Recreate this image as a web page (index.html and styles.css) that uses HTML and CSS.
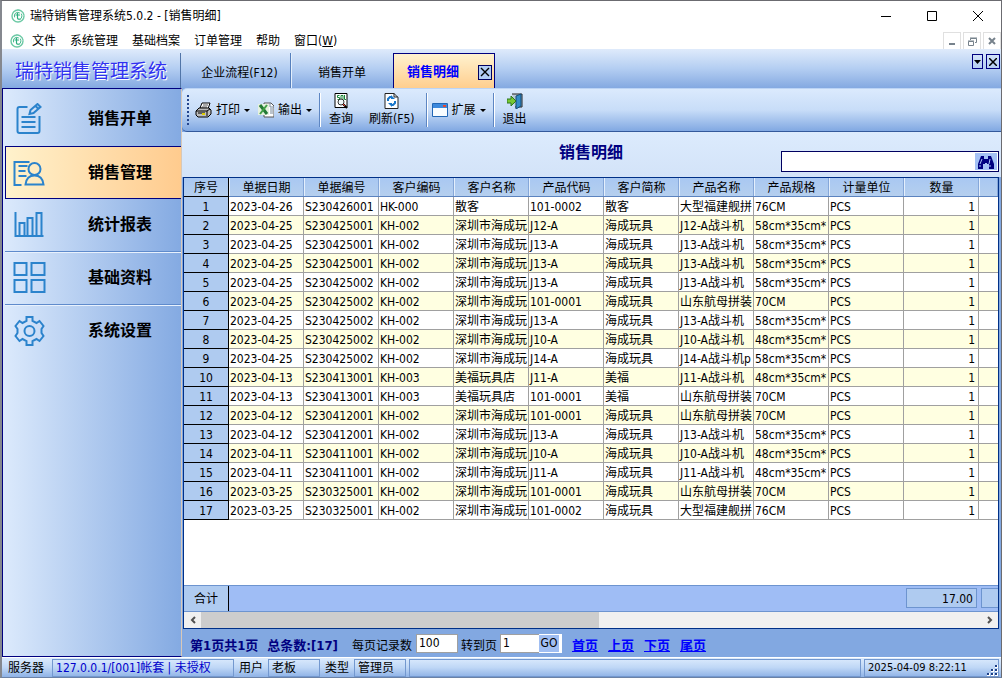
FILE: index.html
```html
<!DOCTYPE html>
<html lang="zh-CN">
<head>
<meta charset="utf-8">
<title>瑞特销售管理系统5.0.2 - [销售明细]</title>
<link rel="stylesheet" href="styles.css">
</head>
<body>
<svg class="defs" aria-hidden="true">
  <symbol id="logo" viewBox="0 0 14 14"><g fill="none" stroke-linecap="round"><path d="M7 1a6 6 0 1 0 6 6M5 1.400a6 6 0 0 1 8 4.600" stroke="#6cc9a5" stroke-width="1.400"/><path d="M3.500 8a3.500 3.500 0 0 1 5-4.200M10.500 5a4 4 0 0 1-1.500 5.500" stroke="#43b98b"/><path d="M6.500 4v5q.5 1.800 2.500 1M5 6h3.500" stroke="#2cae7e" stroke-width="1.200"/></g></symbol>
</svg>
<div class="window">
  <header class="titlebar">
    <svg class="logo"><use href="#logo"/></svg>
    <h1 class="caption">瑞特销售管理系统5.0.2 - [销售明细]</h1>
    <div class="winbtns">
      <button aria-label="最小化"><svg width="12" height="12"><path d="M1 6.500h10" stroke="#000"/></svg></button>
      <button aria-label="最大化"><svg width="12" height="12"><path d="M1.500 1.500h9v9h-9z" fill="none" stroke="#000"/></svg></button>
      <button aria-label="关闭"><svg width="12" height="12"><path d="M1 1l10 10M11 1L1 11" stroke="#000"/></svg></button>
    </div>
  </header>
  <nav class="menubar">
    <svg class="logo"><use href="#logo"/></svg>
    <button>文件</button><button>系统管理</button><button>基础档案</button><button>订单管理</button><button>帮助</button><button>窗口(<u>W</u>)</button>
    <div class="mdibtns">
      <button aria-label="最小化子窗口"><svg width="8" height="8"><path d="M1 7h6" stroke="#77828c" stroke-width="2"/></svg></button>
      <button aria-label="还原子窗口"><svg width="9" height="9"><path d="M2.500 3V1.500h6v4H7M.5 4.500h5v4h-5zM2 1h7M0 4h6" fill="none" stroke="#77828c"/></svg></button>
      <button aria-label="关闭子窗口"><svg width="8" height="8"><path d="M1 1l6 6M7 1L1 7" stroke="#77828c" stroke-width="2"/></svg></button>
    </div>
  </nav>
  <div class="tabbar">
    <div class="brand">瑞特销售管理系统</div>
    <button class="tab">企业流程(F12)</button>
    <button class="tab tab-plain">销售开单</button>
    <div class="tab-active"><button class="tab-name">销售明细</button><button class="box-x" aria-label="关闭标签"><svg width="10" height="10"><path d="M1 1l8 8M9 1L1 9" stroke="#000" stroke-width="1.400"/></svg></button></div>
    <div class="tab-tools">
      <button class="drop" aria-label="标签列表"><svg width="7" height="4"><path d="M0 0h7L3.500 4z"/></svg></button>
      <button aria-label="关闭当前标签"><svg width="8" height="8"><path d="M0 0l8 8M8 0L0 8" stroke="#000" stroke-width="1.500"/></svg></button>
    </div>
  </div>
  <div class="main">
    <nav class="sidebar">
      <button class="side"><svg viewBox="0 0 32 32"><path d="M14 4H6q-2 0-2 2v22q0 2 2 2h18q2 0 2-2V13M8 14h14M8 19h14M8 24h14M16 11l1-4 7-6 3 3-7 6zM22 3l3 3"/></svg><span>销售开单</span></button>
      <button class="side selected"><svg viewBox="0 0 32 32"><path d="M16 5H1v23h7M5 9h9M5 14h7M5 19h8"/><circle cx="21" cy="12" r="6"/><path d="M12 27.500q1-9 9-9t9 9z"/></svg><span>销售管理</span></button>
      <button class="side"><svg viewBox="0 0 32 32"><path d="M2 3v24h28M6 27V14h5v13M14 27V9h5v18M23 27V4h5v23"/></svg><span>统计报表</span></button>
      <button class="side"><svg viewBox="0 0 32 32"><path d="M1 1h12v12H1zM18 1h13v12H18zM1 18h12v12H1zM18 18h13v12H18z"/></svg><span>基础资料</span></button>
      <button class="side last"><svg viewBox="0 0 32 32"><path d="M13 2h6v4l4 2 3-2 4 5-2 3v4l2 3-4 5-3-2-4 2v4h-6v-4l-4-2-3 2-4-5 2-3v-4l-2-3 4-5 3 2 4-2z"/><circle cx="16" cy="16" r="5"/></svg><span>系统设置</span></button>
    </nav>
    <main class="content">
      <div class="toolbar">
        <span class="grip"></span>
        <button class="tool"><svg width="17" height="16"><path d="M5 6L7 1h8l-2 6z" fill="#fff" stroke="#000"/><path d="M8 3h5M7 5h5" stroke="#555"/><path d="M1 9l3-3h10l2 2v4l-3 3H3l-2-2z" fill="#bdbdbd" stroke="#000"/><path d="M1 9h11v5M12 9l3-2M3 11h7" fill="none" stroke="#000"/><path d="M7 12h3" stroke="#dc0" stroke-width="2"/></svg>打印<i class="arrow"></i></button>
        <button class="tool"><svg width="16" height="16"><path d="M6 1h7l3 3v11H6z" fill="#fff" stroke="#555"/><path d="M12 1v4h4M12 7h3M12 9h3M12 11h3" fill="none" stroke="#789"/><path d="M0 2h11v11H0z" fill="#e6f1df"/><path d="M2 3l7 9" stroke="#237a35" stroke-width="3"/><path d="M9 3l-7 9" stroke="#43a047" stroke-width="2"/></svg>输出<i class="arrow"></i></button>
        <span class="sep"></span>
        <button class="tool tall"><svg width="15" height="16"><path d="M1 .5h12v14H1z" fill="#fff" stroke="#000"/><path d="M5.500 2.500h-2v2h2v2h-2M7 2.500h2v4H7zM10.500 2v4.500H12" fill="none" stroke="#16863a"/><circle cx="7" cy="9" r="3" fill="#eef8fb" stroke="#333"/><path d="M9 11l4 4" stroke="#000" stroke-width="2"/><path d="M9 11l2 2" stroke="#e32"/></svg>查询</button>
        <button class="tool tall"><svg width="15" height="16"><path d="M1 .5h9l4 4v11H1z" fill="#fff" stroke="#222"/><path d="M10 0v4h4" fill="none" stroke="#222"/><path d="M4 8V6l2-2h2M11 8v2l-2 2H7" fill="none" stroke="#1976c9" stroke-width="2"/><path d="M7 2l4 4H7zM8 14l-4-4h4z" fill="#1976c9"/></svg>刷新(F5)</button>
        <span class="sep"></span>
        <button class="tool"><svg width="16" height="16"><path d="M.5 1.500h15v13H.5z" fill="#f8fcff" stroke="#2166b5"/><path d="M1 2h14v4H1z" fill="#3d89dc"/><path d="M11 3h3v2h-3z" fill="#e54830"/></svg>扩展<i class="arrow"></i></button>
        <span class="sep"></span>
        <button class="tool tall"><svg width="16" height="16"><path d="M5 1h10v13H8" fill="#b9c9d4" stroke="#222"/><path d="M9 3l5-2v12l-5 3z" fill="#338bc7" stroke="#124b78"/><path d="M0 6h4V3l5 5-5 5v-3H0z" fill="#78c832" stroke="#2d7620"/></svg>退出</button>
      </div>
      <div class="heading">
        <h2>销售明细</h2>
        <form class="search"><input aria-label="搜索"><button type="button" aria-label="查找"><svg width="16" height="14"><path d="M3 1h3v3h4V1h3l3 8v5h-5V9H9V8H7v1H5v5H0V9z" fill="#000080"/><path d="M2 9l2-5M11 9l1-5M2 10v2M12 10v2" stroke="#a9c4f5"/></svg></button></form>
      </div>
      <section class="grid">
        <div class="viewport">
          <table>
            <colgroup><col class="c-no"><col class="c"><col class="c"><col class="c"><col class="c"><col class="c"><col class="c"><col class="c"><col class="c"><col class="c"><col class="c"><col></colgroup>
            <thead><tr><th>序号</th><th>单据日期</th><th>单据编号</th><th>客户编码</th><th>客户名称</th><th>产品代码</th><th>客户简称</th><th>产品名称</th><th>产品规格</th><th>计量单位</th><th>数量</th><th></th></tr></thead>
            <tbody>
              <tr><th>1</th><td>2023-04-26</td><td>S230426001</td><td>HK-000</td><td>散客</td><td>101-0002</td><td>散客</td><td>大型福建舰拼</td><td>76CM</td><td>PCS</td><td>1</td><td></td></tr>
              <tr><th>2</th><td>2023-04-25</td><td>S230425001</td><td>KH-002</td><td>深圳市海成玩</td><td>J12-A</td><td>海成玩具</td><td>J12-A战斗机</td><td>58cm*35cm*</td><td>PCS</td><td>1</td><td></td></tr>
              <tr><th>3</th><td>2023-04-25</td><td>S230425001</td><td>KH-002</td><td>深圳市海成玩</td><td>J13-A</td><td>海成玩具</td><td>J13-A战斗机</td><td>58cm*35cm*</td><td>PCS</td><td>1</td><td></td></tr>
              <tr><th>4</th><td>2023-04-25</td><td>S230425001</td><td>KH-002</td><td>深圳市海成玩</td><td>J13-A</td><td>海成玩具</td><td>J13-A战斗机</td><td>58cm*35cm*</td><td>PCS</td><td>1</td><td></td></tr>
              <tr><th>5</th><td>2023-04-25</td><td>S230425002</td><td>KH-002</td><td>深圳市海成玩</td><td>J13-A</td><td>海成玩具</td><td>J13-A战斗机</td><td>58cm*35cm*</td><td>PCS</td><td>1</td><td></td></tr>
              <tr><th>6</th><td>2023-04-25</td><td>S230425002</td><td>KH-002</td><td>深圳市海成玩</td><td>101-0001</td><td>海成玩具</td><td>山东航母拼装</td><td>70CM</td><td>PCS</td><td>1</td><td></td></tr>
              <tr><th>7</th><td>2023-04-25</td><td>S230425002</td><td>KH-002</td><td>深圳市海成玩</td><td>J13-A</td><td>海成玩具</td><td>J13-A战斗机</td><td>58cm*35cm*</td><td>PCS</td><td>1</td><td></td></tr>
              <tr><th>8</th><td>2023-04-25</td><td>S230425002</td><td>KH-002</td><td>深圳市海成玩</td><td>J10-A</td><td>海成玩具</td><td>J10-A战斗机</td><td>48cm*35cm*</td><td>PCS</td><td>1</td><td></td></tr>
              <tr><th>9</th><td>2023-04-25</td><td>S230425002</td><td>KH-002</td><td>深圳市海成玩</td><td>J14-A</td><td>海成玩具</td><td>J14-A战斗机p</td><td>58cm*35cm*</td><td>PCS</td><td>1</td><td></td></tr>
              <tr><th>10</th><td>2023-04-13</td><td>S230413001</td><td>KH-003</td><td>美福玩具店</td><td>J11-A</td><td>美福</td><td>J11-A战斗机</td><td>48cm*35cm*</td><td>PCS</td><td>1</td><td></td></tr>
              <tr><th>11</th><td>2023-04-13</td><td>S230413001</td><td>KH-003</td><td>美福玩具店</td><td>101-0001</td><td>美福</td><td>山东航母拼装</td><td>70CM</td><td>PCS</td><td>1</td><td></td></tr>
              <tr><th>12</th><td>2023-04-12</td><td>S230412001</td><td>KH-002</td><td>深圳市海成玩</td><td>101-0001</td><td>海成玩具</td><td>山东航母拼装</td><td>70CM</td><td>PCS</td><td>1</td><td></td></tr>
              <tr><th>13</th><td>2023-04-12</td><td>S230412001</td><td>KH-002</td><td>深圳市海成玩</td><td>J13-A</td><td>海成玩具</td><td>J13-A战斗机</td><td>58cm*35cm*</td><td>PCS</td><td>1</td><td></td></tr>
              <tr><th>14</th><td>2023-04-11</td><td>S230411001</td><td>KH-002</td><td>深圳市海成玩</td><td>J10-A</td><td>海成玩具</td><td>J10-A战斗机</td><td>48cm*35cm*</td><td>PCS</td><td>1</td><td></td></tr>
              <tr><th>15</th><td>2023-04-11</td><td>S230411001</td><td>KH-002</td><td>深圳市海成玩</td><td>J11-A</td><td>海成玩具</td><td>J11-A战斗机</td><td>48cm*35cm*</td><td>PCS</td><td>1</td><td></td></tr>
              <tr><th>16</th><td>2023-03-25</td><td>S230325001</td><td>KH-002</td><td>深圳市海成玩</td><td>101-0001</td><td>海成玩具</td><td>山东航母拼装</td><td>70CM</td><td>PCS</td><td>1</td><td></td></tr>
              <tr><th>17</th><td>2023-03-25</td><td>S230325001</td><td>KH-002</td><td>深圳市海成玩</td><td>101-0002</td><td>海成玩具</td><td>大型福建舰拼</td><td>76CM</td><td>PCS</td><td>1</td><td></td></tr>
            </tbody>
          </table>
        </div>
        <div class="totals"><span class="sum-label">合计</span><output class="sum">17.00</output><span class="sum-next"></span></div>
        <div class="hscroll">
          <button aria-label="向左滚动"><svg width="6" height="8"><path d="M5 1L2 4l3 3" fill="none" stroke="#505050" stroke-width="2"/></svg></button>
          <div class="track"><div class="thumb"></div></div>
          <button aria-label="向右滚动"><svg width="6" height="8"><path d="M1 1l3 3-3 3" fill="none" stroke="#505050" stroke-width="2"/></svg></button>
        </div>
      </section>
      <footer class="pager">
        <strong>第1页共1页</strong><strong class="count">总条数:[17]</strong>
        <label for="size">每页记录数</label><input id="size" class="size" value="100">
        <label for="goto">转到页</label><span class="goto"><input id="goto" value="1"><button>GO</button></span>
        <span class="links"><a href="#">首页</a><a href="#">上页</a><a href="#">下页</a><a href="#">尾页</a></span>
      </footer>
    </main>
  </div>
  <footer class="status">
    <span>服务器</span><span class="cell server">127.0.0.1/[001]帐套 | 未授权</span>
    <span>用户</span><span class="cell short">老板</span>
    <span>类型</span><span class="cell short">管理员</span>
    <span class="cell fill"></span>
    <span class="cell clock">2025-04-09 8:22:11<svg width="11" height="11"><path d="M8 0h3v3H8zM8 4h3v3H8zM4 4h3v3H4zM8 8h3v3H8zM4 8h3v3H4zM0 8h3v3H0z" fill="#fff"/><path d="M8 0h2v2H8zM8 4h2v2H8zM4 4h2v2H4zM8 8h2v2H8zM4 8h2v2H4zM0 8h2v2H0z" fill="#1c3f86"/></svg></span>
  </footer>
</div>
</body>
</html>
```
FILE: styles.css
```css
* { box-sizing: border-box; }
body { margin: 0; }
body, button, input {
  font: 12px/16px "DejaVu Sans Condensed", "Noto Sans CJK SC", sans-serif;
  color: #000;
}
button { padding: 0; border: 0; background: none; white-space: nowrap; }
input { padding: 0 2px; border: 0; border-radius: 0; outline: 0; background: #fff; }
svg { display: block; flex: none; }
.defs { display: none; }
.window {
  display: flex; flex-direction: column; height: 100vh; overflow: hidden;
  border: 1px solid #6b6b70; border-left: 2px solid #85888f; border-bottom-color: #6b82a6;
  background: #fff;
}
.logo { width: 14px; height: 14px; }

/* Title and menu */
.titlebar { display: flex; align-items: center; flex: none; height: 30px; padding-left: 9px; gap: 5px; }
.caption { flex: 1; margin: 0; font-size: 12px; font-weight: 400; }
.winbtns { display: flex; }
.winbtns button { display: grid; place-items: center; width: 46px; height: 28px; }
.menubar { display: flex; align-items: center; flex: none; height: 18px; padding: 2px 0 0 8px; gap: 14px; }
.menubar .logo { margin-right: -6px; }
.mdibtns { display: flex; gap: 2px; margin-left: auto; }
.mdibtns button { display: grid; place-items: center; width: 18px; height: 18px; border: 1px solid #e0e0e0; }

/* Document tabs */
.tabbar {
  display: flex; flex: none; height: 39px;
  background: linear-gradient(#dfebfb, #b4cef2 50%, #84a9e1);
}
.brand {
  width: 179px; margin-top: 4px; padding-left: 13px; border-right: 1px solid #5175a8;
  font: 400 19px/34px "Noto Sans CJK SC", sans-serif; color: #3030f0; text-shadow: 1px 1px 0 #fff;
}
.tab { width: 110px; margin-top: 4px; padding: 4px 0 0 8px; border-right: 1px solid #5680bd; box-shadow: 1px 0 #e4effc; }
.tab-plain { width: 102px; padding-left: 0; border: 0; box-shadow: none; }
.tab-active {
  display: flex; align-items: center; justify-content: space-between;
  width: 102px; margin-top: 4px; padding: 2px 2px 0 13px;
  border: 1px solid #000080; border-bottom: 0; background: linear-gradient(#fff2cf, #ffce8e);
}
.tab-name { font-size: 13px; font-weight: 700; color: #00f; }
.box-x { display: grid; place-items: center; width: 14px; height: 15px; border: 1px solid #000060; background: #b2cdf4; }
.tab-tools { display: flex; gap: 3px; margin: 5px 1px 0 auto; }
.tab-tools button { display: grid; place-items: center; width: 14px; height: 15px; border: 1px solid #000080; }
.tab-tools .drop { width: 11px; }

/* Sidebar */
.main { display: flex; flex: 1; min-height: 0; }
.sidebar {
  display: flex; flex-direction: column; flex: none; width: 180px; padding: 4px 0 0 2px;
  border: 1px solid #000080; border-right: 1px solid #d8c8b8;
  background: linear-gradient(90deg, #dceafc, #84aae2);
}
.side {
  display: flex; align-items: center; gap: 42px; height: 53px; padding-left: 8px;
  border-bottom: 1px solid #5f8bcc; box-shadow: 0 1px #e8f1fd; font-size: 16px; font-weight: 700;
}
.side svg { width: 33px; height: 32px; fill: none; stroke: #2b83cc; stroke-width: 2; }
.side:first-child, .side.last { border-bottom-color: transparent; box-shadow: none; }
.side.selected { padding-left: 7px; border: 1px solid #000080; border-right: 0; background: linear-gradient(90deg, #fff2cc, #ffcb8e); box-shadow: none; }

/* Toolbar */
.content { display: flex; flex-direction: column; flex: 1; min-width: 0; background: #82a8e1; }
.toolbar {
  display: flex; align-items: center; flex: none; height: 44px; padding-left: 5px;
  border-top: 1px solid #bcd4f5; border-bottom: 1px solid #33599b;
  border-radius: 5px 0 0 5px;
  background: linear-gradient(#dbeafd, #c8ddf8 50%, #81a8e2);
}
.grip { width: 2px; height: 30px; margin-right: 2px; background: repeating-linear-gradient(#25458c 0 2px, transparent 2px 4px); }
.tool { display: flex; align-items: center; gap: 4px; margin: 0 4px; }
.arrow { border: 3px solid transparent; border-top-color: #000; border-bottom: 0; }
.sep { width: 2px; height: 34px; margin-left: 3px; border-left: 1px solid #5d86c3; border-right: 1px solid #fff; }
.tall { flex-direction: column; gap: 2px; margin: 0; padding: 0 8px; }

/* Heading and search */
.heading {
  display: grid; grid-template-columns: 1fr auto 1fr; flex: none; height: 45px; padding: 0 2px 0 1px;
  background: linear-gradient(#dcebfd, #d3e3f8);
}
.heading h2 { grid-column: 2; margin: 10px 0 0; font-size: 16px; line-height: 22px; color: #000080; }
.search {
  display: flex; justify-self: end; align-self: end; width: 218px; height: 21px; margin-bottom: 5px; padding: 1px;
  border: 1px solid #000060; background: #fff;
}
.search input { flex: 1; min-width: 0; }
.search button { display: grid; place-items: center; width: 22px; background: #a5c2f5; }

/* Records */
.grid { display: flex; flex-direction: column; flex: 1; min-height: 0; margin: 0 2px 0 1px; border: 1px solid #003087; background: #fff; }
.viewport { flex: 1; min-height: 0; overflow: hidden; }
table { width: 100%; table-layout: fixed; border-collapse: separate; border-spacing: 0; }
.c-no { width: 45px; }
.c { width: 75px; }
th, td { height: 19px; padding: 2px 1px 0; overflow: hidden; white-space: nowrap; line-height: 16px; }
td { border-right: 1px solid #a0a0a0; border-bottom: 1px solid #a0a0a0; text-align: left; }
td:nth-child(11) { padding-right: 3px; text-align: right; }
td:last-child { border-right: 0; }
th { background: #afcbf0; font-weight: 400; text-align: center; }
thead th { border-bottom: 1px solid #5b83bf; background: linear-gradient(#a9c8f2, #b5cfee); box-shadow: inset -1px 0 #85a7d9, inset 1px 0 #e4effc; }
thead th:first-child { box-shadow: none; }
th:first-child { border-right: 1px solid #000; border-bottom: 1px solid #000; }
tbody tr:nth-child(even) td { background: #ffffe1; }
.totals { display: flex; flex: none; height: 27px; border: 1px solid #6d94cf; border-width: 1px 0; background: #9fbdf5; }
.sum-label { width: 45px; border-right: 1px solid #000; background: #afcbf0; line-height: 26px; text-align: center; }
.sum { width: 71px; height: 20px; margin: 2px 4px 0 auto; padding-right: 3px; border: 1px solid #6d94cf; background: #afcbf0; line-height: 20px; text-align: right; }
.sum-next { width: 17px; height: 20px; margin-top: 2px; border: 1px solid #6d94cf; border-right: 0; background: #afcbf0; }
.hscroll { display: flex; flex: none; height: 16px; background: #f0f0f0; }
.hscroll button { display: grid; place-items: center; width: 17px; }
.track { flex: 1; }
.thumb { width: 51%; height: 100%; background: #cdcdcd; }

/* Pager */
.pager { display: flex; align-items: center; flex: none; height: 28px; padding: 6px 0 0 8px; white-space: nowrap; }
.pager strong { font-size: 13px; color: #000080; }
.pager .count { margin: 0 14px 0 9px; }
.pager input { height: 19px; border: 1px solid #a0a0a0; }
.pager .size { width: 42px; margin: 0 3px 6px 4px; }
.goto { display: flex; width: 62px; height: 19px; margin: 0 10px 6px 3px; background: #fff; }
.goto input { flex: 1; min-width: 0; border-right: 0; }
.goto button { width: 20px; margin: 1px 3px 1px 0; background: #a0bef2; }
.links { display: flex; gap: 10px; }
.links a { font-size: 13px; font-weight: 700; color: #00f; text-underline-offset: 1px; }

/* Status bar */
.status {
  display: flex; align-items: center; flex: none; height: 20px; padding: 1px 2px 1px 6px; gap: 3px;
  border-top: 1px solid #fff; background: linear-gradient(#dcebfd, #bfd7f6 50%, #8eb2e6); white-space: nowrap;
}
.cell { height: 18px; padding: 0 3px; border: 1px solid #7398cf; }
.server { width: 182px; margin: 0 2px 0 5px; color: #00c; }
.short { width: 52px; margin: 0 2px; }
.fill { flex: 1; margin-left: -2px; }
.clock { display: flex; justify-content: space-between; align-items: flex-end; width: 135px; padding-right: 0; font-size: 11px; }
```
